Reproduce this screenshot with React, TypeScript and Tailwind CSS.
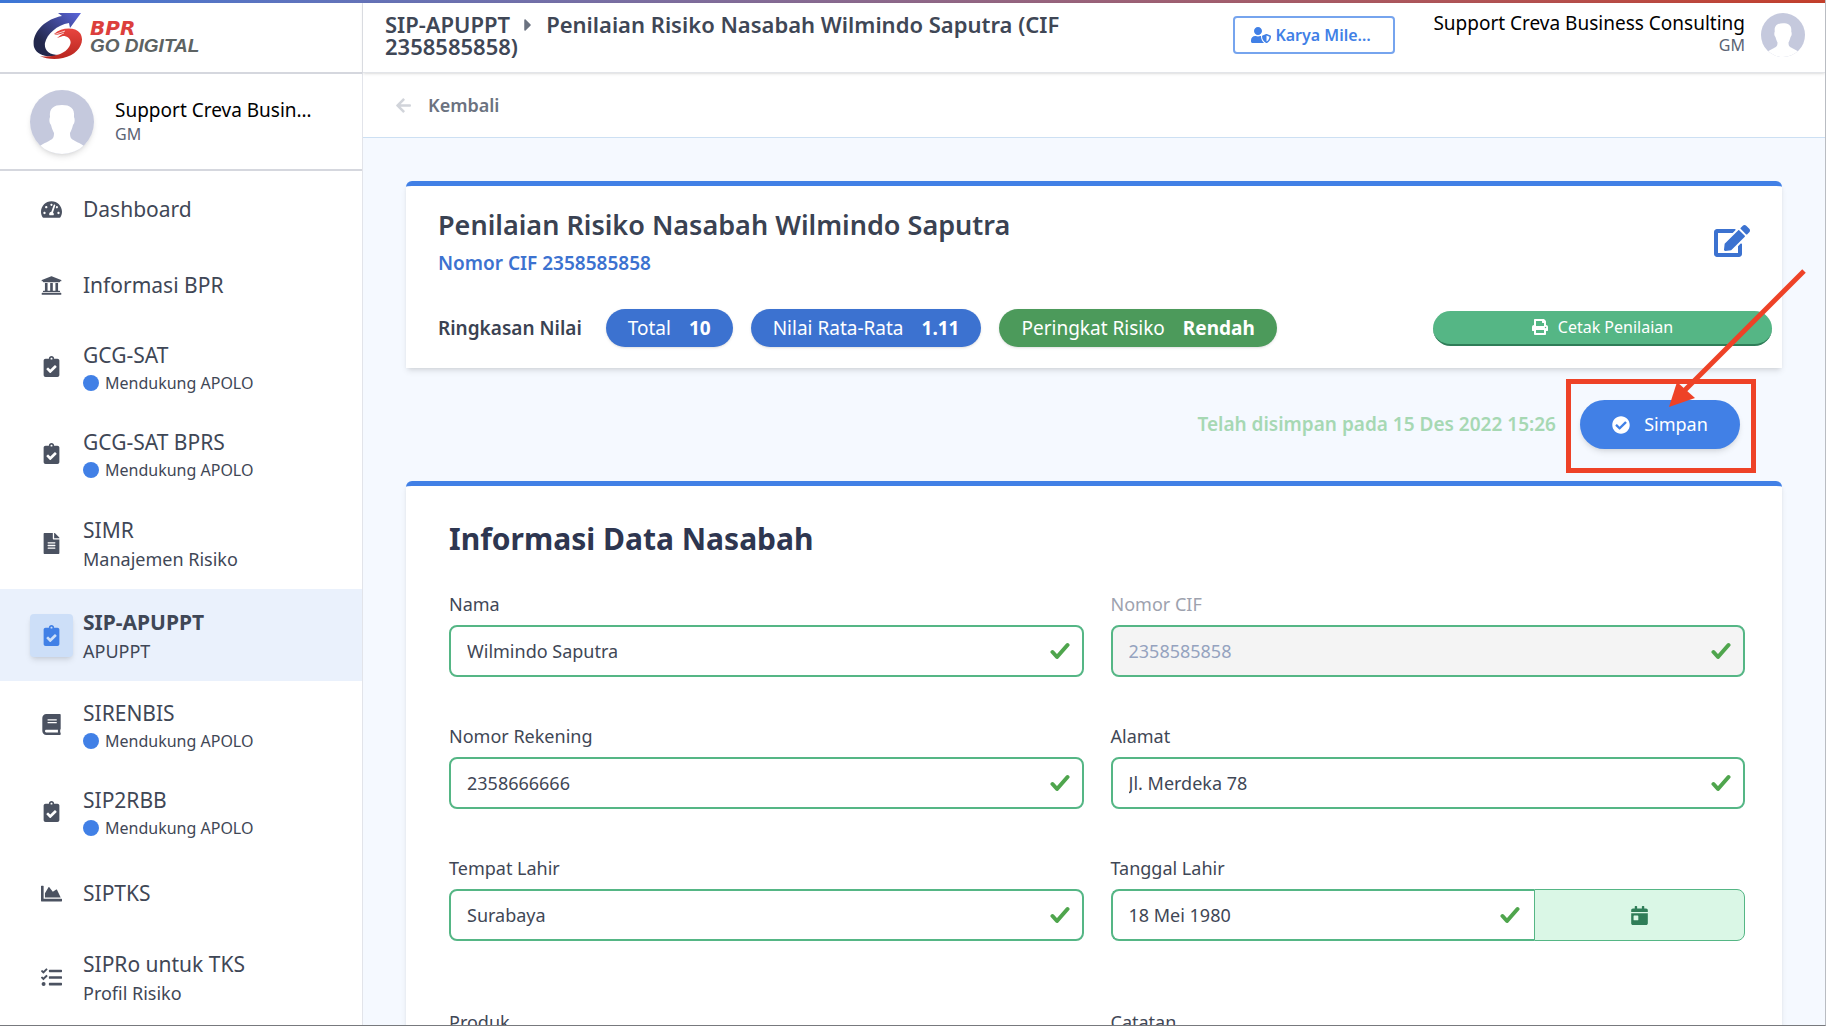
import { useState } from "react";
import type { ReactNode } from "react";
import type { IconType } from "react-icons";
import {
    FaArrowLeft,
    FaBook,
    FaCalendarDay,
    FaCaretRight,
    FaChartArea,
    FaCheckCircle,
    FaClipboardCheck,
    FaEdit,
    FaFileAlt,
    FaPrint,
    FaTachometerAlt,
    FaTasks,
    FaUniversity,
    FaUserShield
} from "react-icons/fa";
import { clsx } from "clsx";

type MenuItem = {
    title: string;
    icon: IconType;
    subtitle?: string;
    apolo?: boolean;
    active?: boolean;
};

const menu: MenuItem[] = [
    { title: "Dashboard", icon: FaTachometerAlt },
    { title: "Informasi BPR", icon: FaUniversity },
    { title: "GCG-SAT", icon: FaClipboardCheck, apolo: true },
    { title: "GCG-SAT BPRS", icon: FaClipboardCheck, apolo: true },
    { title: "SIMR", icon: FaFileAlt, subtitle: "Manajemen Risiko" },
    { title: "SIP-APUPPT", icon: FaClipboardCheck, subtitle: "APUPPT", active: true },
    { title: "SIRENBIS", icon: FaBook, apolo: true },
    { title: "SIP2RBB", icon: FaClipboardCheck, apolo: true },
    { title: "SIPTKS", icon: FaChartArea },
    { title: "SIPRo untuk TKS", icon: FaTasks, subtitle: "Profil Risiko" }
];

const Logo = () => (
    <a href="#" className="flex items-center gap-1.5">
        <svg viewBox="0 0 52 48" className="w-[52px] h-12" aria-hidden="true">
            <defs>
                <linearGradient id="arrow" x1="0" y1="1" x2="1" y2="0">
                    <stop offset="0.25" stopColor="#23284c" />
                    <stop offset="1" stopColor="#5b66dc" />
                </linearGradient>
                <linearGradient id="swoosh" x1="0" y1="0" x2="0" y2="1">
                    <stop offset="0" stopColor="#e8453f" />
                    <stop offset="1" stopColor="#b8261f" />
                </linearGradient>
            </defs>
            <path
                d="M26 1 L49 1 L38 16 L37 11 C25 13 15 22 13 31 C12 38 17 43 27 43 C17 46 5 44 2 35 C-1 21 13 7 30 4 Z"
                fill="url(#arrow)"
            />
            <path
                d="M22 22 C30 15 43 15 48 21 C54 30 46 43 31 46 C23 48 14 47 8 44 C20 46 33 42 37 35 C41 29 37 24 31 24 L25 26 L30 22 L23 23 Z"
                fill="url(#swoosh)"
            />
            <path d="M20 26 L32 21 M21 23 L33 19 M24 28 L31 25" stroke="#fff" strokeWidth="0.7" />
        </svg>
        <span className="flex flex-col font-bold italic">
            <span className="font-['DejaVu_Sans',sans-serif] text-[20px] leading-5 text-[#dc3f3c]">BPR</span>
            <span className="font-['Liberation_Sans',sans-serif] text-[19px] leading-4 text-[#5d6363]">GO DIGITAL</span>
        </span>
    </a>
);

const Avatar = ({ className }: { className?: string }) => (
    <svg viewBox="0 0 64 64" className={clsx("shrink-0 rounded-full", className)} aria-hidden="true">
        <rect width="64" height="64" fill="#c5c9dd" />
        <path
            d="M32 15 C40 15 45 18 44 27 C45 29 45 33 43 35 C42 39 41 41 40 43 C40 49 42 49 45 51 C49 53 52 54 56 58 L56 64 H8 L8 58 C12 54 15 53 19 51 C22 49 24 49 24 43 C23 41 22 39 21 35 C19 33 19 29 20 27 C19 18 24 15 32 15 Z"
            fill="#fff"
        />
    </svg>
);

const ValidMark = () => (
    <svg
        viewBox="0 0 20 18"
        className="absolute right-3.5 top-[17px] w-5 h-[18px] pointer-events-none"
        fill="none"
        stroke="#4fa54d"
        strokeWidth="4"
        strokeLinecap="round"
        strokeLinejoin="round"
        aria-hidden="true"
    >
        <path d="M2.5 10 L7 15 L17.5 3" />
    </svg>
);

const NavItem = ({ item }: { item: MenuItem }) => {
    const Icon = item.icon;

    return (
        <a
            href="#"
            className={clsx(
                "flex items-center gap-2.5 pl-[30px] text-[#3f4756]",
                item.apolo ? "h-[87px]" : item.subtitle ? "h-[92px]" : "h-[76px]",
                item.active && "bg-[#eaf1fc]"
            )}
        >
            <span
                className={clsx(
                    "w-[43px] h-[43px] shrink-0 rounded flex items-center justify-center",
                    item.active ? "bg-[#cddff8] text-[#4180e6] shadow-md" : "text-[#4b5261]"
                )}
            >
                <Icon className="text-[21px]" />
            </span>
            <span className={clsx("flex flex-col", (item.apolo || item.subtitle) && "pt-1")}>
                <span className={clsx("text-[21px] leading-7", item.active && "font-bold")}>{item.title}</span>
                {item.apolo && (
                    <span className="flex items-center gap-1.5 text-[16px] leading-7">
                        <span className="w-4 h-4 rounded-full bg-[#4180e6]" />
                        Mendukung APOLO
                    </span>
                )}
                {item.subtitle && <span className="text-[18px] leading-[30px]">{item.subtitle}</span>}
            </span>
        </a>
    );
};

const Pill = ({ label, value, className }: { label: string; value: string; className?: string }) => (
    <span
        className={clsx(
            "h-[38px] px-[22px] rounded-full flex items-center gap-[18px] text-[19px] text-white whitespace-nowrap shadow",
            className
        )}
    >
        {label}
        <strong>{value}</strong>
    </span>
);

type FieldProps = {
    id: string;
    label: string;
    initial: string;
    disabled?: boolean;
    addon?: ReactNode;
};

const Field = ({ id, label, initial, disabled, addon }: FieldProps) => {
    const [value, setValue] = useState(initial);

    return (
        <div>
            <label
                htmlFor={id}
                className={clsx("block mb-[9px] text-[18px] leading-6", disabled ? "text-[#9da2ae]" : "text-[#3f4756]")}
            >
                {label}
            </label>
            <div className="flex h-[52px]">
                <div className="relative flex-1">
                    <input
                        id={id}
                        type="text"
                        value={value}
                        disabled={disabled}
                        onChange={(e) => setValue(e.target.value)}
                        className={clsx(
                            "w-full h-full pl-4 pr-12 border-2 border-[#55b685] text-[18px] outline-none",
                            addon ? "rounded-l-lg border-r-0" : "rounded-lg",
                            disabled ? "bg-[#f4f4f4] text-[#95a3bf]" : "bg-white text-[#3f4756]"
                        )}
                    />
                    {value && <ValidMark />}
                </div>
                {addon}
            </div>
        </div>
    );
};

export default function App() {
    return (
        <div className="h-screen overflow-hidden flex flex-col bg-white border-r border-r-[#b9bcc2] border-b border-b-[#77797d] font-['Noto_Sans',sans-serif]">
            <div className="h-[3px] shrink-0 bg-gradient-to-r from-[#3c76d6] to-[#c43f2b]" />

            <div className="flex flex-1 min-h-0">
                {/* Sidebar */}
                <aside className="w-[363px] shrink-0 border-r border-[#e2e4ea] overflow-hidden">
                    <div className="h-[71px] pl-8 pb-1 flex items-center border-b-2 border-[#d5d7de]">
                        <Logo />
                    </div>
                    <div className="h-[97px] pl-[30px] flex items-center gap-[21px] border-b-2 border-[#d5d7de]">
                        <Avatar className="w-16 h-16 shadow-md" />
                        <div className="w-[204px]">
                            <p className="text-[19px] leading-6 text-black truncate">Support Creva Business Consulting</p>
                            <p className="text-[16px] leading-6 text-[#5b6474]">GM</p>
                        </div>
                    </div>
                    <nav>
                        {menu.map((item) => (
                            <NavItem key={item.title} item={item} />
                        ))}
                    </nav>
                </aside>

                <div className="flex-1 min-w-0 flex flex-col">
                    {/* Header */}
                    <header className="h-[70px] shrink-0 pl-[22px] pr-5 pb-1.5 flex items-center border-b border-[#e3e5e9] shadow-sm">
                        <div className="flex-1 min-w-0">
                            <h1 className="max-w-[760px] text-[22px] leading-[22px] font-semibold text-[#3f4756]">
                                SIP-APUPPT
                                <FaCaretRight className="inline mx-2 text-[20px] align-[-2px] text-[#6b7280]" />
                                Penilaian Risiko Nasabah Wilmindo Saputra (CIF 2358585858)
                            </h1>
                        </div>
                        <button
                            type="button"
                            className="w-[162px] h-[38px] flex items-center gap-1 pl-4 pr-4 rounded border-2 border-[#76a4ee] text-[16px] font-semibold text-[#4180e6]"
                        >
                            <FaUserShield className="shrink-0 text-[20px]" />
                            <span className="truncate">Karya Milenial</span>
                        </button>
                        <div className="ml-[38px] mr-4 pb-1 text-right">
                            <p className="text-[19px] leading-6 text-black">Support Creva Business Consulting</p>
                            <p className="text-[16px] leading-5 text-[#5b6474]">GM</p>
                        </div>
                        <Avatar className="w-11 h-11" />
                    </header>

                    <div className="h-[65px] shrink-0 pl-8 flex items-center border-b border-[#cde0f3]">
                        <a href="#" className="flex items-center gap-4 text-[18px] font-semibold text-[#6b7280]">
                            <FaArrowLeft className="text-[17px] text-[#d1d4da]" />
                            Kembali
                        </a>
                    </div>

                    <main className="flex-1 min-h-0 overflow-y-auto [scrollbar-width:none] bg-[#f5f9ff] px-[43px] pt-[43px]">
                        {/* Summary */}
                        <section className="bg-white rounded-t-md border-t-[5px] border-[#4180e6] shadow-md pl-8 pr-2.5 pt-[21px] pb-[21px]">
                            <div className="flex items-center justify-between pr-[22px]">
                                <div>
                                    <h2 className="text-[27px] leading-9 font-semibold text-[#3a4252]">
                                        Penilaian Risiko Nasabah Wilmindo Saputra
                                    </h2>
                                    <p className="mt-2 text-[19px] leading-6 font-semibold text-[#3c72d0]">
                                        Nomor CIF 2358585858
                                    </p>
                                </div>
                                <button type="button" aria-label="Ubah penilaian" className="text-[#3c72d0]">
                                    <FaEdit className="text-[36px]" />
                                </button>
                            </div>
                            <div className="mt-[34px] flex items-center gap-[18px]">
                                <span className="mr-1.5 text-[19px] font-semibold text-[#3a4252] whitespace-nowrap">
                                    Ringkasan Nilai
                                </span>
                                <Pill label="Total" value="10" className="bg-[#3c72d0]" />
                                <Pill label="Nilai Rata-Rata" value="1.11" className="bg-[#3c72d0]" />
                                <Pill label="Peringkat Risiko" value="Rendah" className="bg-[#4c9a5b]" />
                                <button
                                    type="button"
                                    className="ml-auto w-[339px] h-[35px] flex items-center justify-center gap-2.5 rounded-full border-b-2 border-[#2f7d58] bg-[#55b685] text-[16px] text-white"
                                >
                                    <FaPrint />
                                    Cetak Penilaian
                                </button>
                            </div>
                        </section>

                        {/* Save bar */}
                        <div className="mt-8 mb-8 pr-[42px] flex items-center justify-end gap-6">
                            <p className="text-[19px] font-semibold text-[#a6d8b3]">
                                Telah disimpan pada 15 Des 2022 15:26
                            </p>
                            <div className="relative">
                                <button
                                    type="button"
                                    className="w-40 h-[49px] flex items-center justify-center gap-3.5 rounded-full bg-[#4180e6] text-[18px] text-white shadow-md"
                                >
                                    <FaCheckCircle />
                                    Simpan
                                </button>
                                <div className="absolute -left-3.5 -right-4 -top-[21px] -bottom-6 border-[5px] border-[#ee4227] pointer-events-none" />
                                <svg
                                    viewBox="0 0 152 147"
                                    className="absolute left-20 -top-[135px] w-[152px] h-[147px] pointer-events-none"
                                    aria-hidden="true"
                                >
                                    <path d="M144 6 L25 125" stroke="#ee4227" strokeWidth="5" />
                                    <path d="M9 142 L17 117 L35 133 Z" fill="#ee4227" />
                                </svg>
                            </div>
                        </div>

                        {/* Form */}
                        <section className="bg-white rounded-t-md border-t-[5px] border-[#4180e6] shadow-md pl-[43px] pr-[37px] pt-[33px] pb-10">
                            <h2 className="mb-[33px] text-[30px] leading-10 font-bold text-[#2e3650]">
                                Informasi Data Nasabah
                            </h2>
                            <div className="grid grid-cols-2 gap-x-[27px] gap-y-[47px]">
                                <Field id="nama" label="Nama" initial="Wilmindo Saputra" />
                                <Field id="cif" label="Nomor CIF" initial="2358585858" disabled />
                                <Field id="rekening" label="Nomor Rekening" initial="2358666666" />
                                <Field id="alamat" label="Alamat" initial="Jl. Merdeka 78" />
                                <Field id="tempat" label="Tempat Lahir" initial="Surabaya" />
                                <Field
                                    id="tanggal"
                                    label="Tanggal Lahir"
                                    initial="18 Mei 1980"
                                    addon={
                                        <button
                                            type="button"
                                            aria-label="Pilih tanggal"
                                            className="w-1/3 flex items-center justify-center rounded-r-lg border border-[#55b685] bg-[#daf7e6] text-[#2f7d58]"
                                        >
                                            <FaCalendarDay className="text-[19px]" />
                                        </button>
                                    }
                                />
                            </div>
                            <div className="mt-[69px] grid grid-cols-2 gap-x-[27px]">
                                <Field id="produk" label="Produk" initial="" />
                                <Field id="catatan" label="Catatan" initial="" />
                            </div>
                        </section>
                    </main>
                </div>
            </div>
        </div>
    );
}
